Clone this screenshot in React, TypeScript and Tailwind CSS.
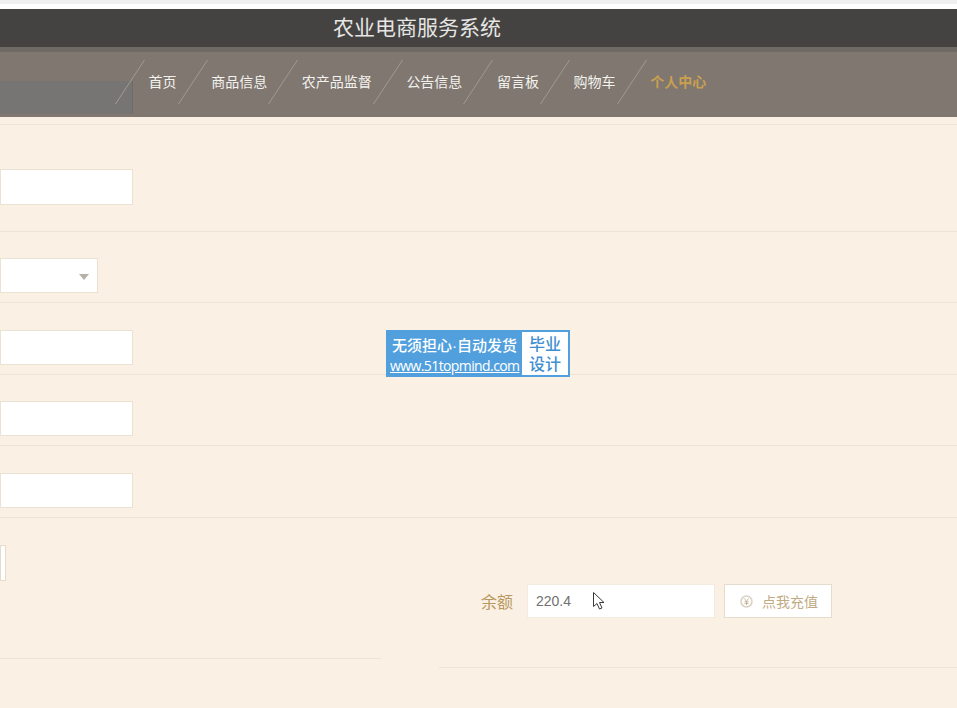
const navItems = ["首页", "商品信息", "农产品监督", "公告信息", "留言板", "购物车", "个人中心"];

const cjk = "font-['Noto_Sans_CJK_SC','Liberation_Sans',sans-serif]";

function Slash() {
    return (
        <div className="w-[34.6px] shrink-0">
            <svg width="30" height="44" viewBox="0 0 30 44" className="block">
                <line x1="0.5" y1="44" x2="29.5" y2="0" stroke="#a39a8e" strokeWidth="1" />
            </svg>
        </div>
    );
}

function FormRow({ width, height, arrow }: { width: string; height: string; arrow?: boolean }) {
    return (
        <div className={`flex items-end border-b border-[#efe4d3] pb-[9px] ${height}`}>
            <div className={`relative h-[35px] border border-[#ece2d3] bg-white ${width}`}>
                {arrow && (
                    <div className="absolute right-[8px] top-[15px] h-0 w-0 border-x-[5px] border-t-[6px] border-x-transparent border-t-[#b5b0a8]" />
                )}
            </div>
        </div>
    );
}

export default function App() {
    return (
        <div className={`relative h-[708px] w-[957px] overflow-hidden bg-[#faf0e4] ${cjk}`}>
            <div className="h-[4px] bg-[#f0f0f0]" />
            <div className="h-[5px] bg-white" />
            <div className="flex h-[38px] items-center bg-[#444341] pb-[4px] pl-[333px] text-[21px] leading-none text-[#e6e6e4]">
                农业电商服务系统
            </div>
            <div className="flex h-[70px] border-t-[5px] border-[#6f6a64] bg-[#7f7770]">
                <div className="mb-[3px] mt-auto h-[33px] w-[133px] shrink-0 border-r border-[#6f6c68] bg-[#767573]" />
                <div className="-ml-[18px] mt-[8px] flex h-[44px] items-center self-start text-[14px] leading-none text-[#f4f2ee]">
                    {navItems.map((item, i) => (
                        <div key={item} className="flex items-center">
                            <Slash />
                            <span className={i === 6 ? "-ml-[1px] mr-[1px] -mt-[2px] font-bold text-[#c9a050]" : "-ml-[1px] mr-[1px] -mt-[2px]"}>{item}</span>
                        </div>
                    ))}
                </div>
            </div>

            <div className="h-[8px] border-b border-[#efe4d3]" />
            <div className="flex h-[107px] items-end border-b border-[#efe4d3] pb-[26px]">
                <div className="h-[36px] w-[133px] border border-[#ece2d3] bg-white" />
            </div>
            <FormRow width="w-[98px]" height="h-[71px]" arrow />
            <FormRow width="w-[133px]" height="h-[72px]" />
            <FormRow width="w-[133px]" height="h-[71px]" />
            <FormRow width="w-[133px]" height="h-[72px]" />

            <div className="flex items-start">
                <div className="h-[141px] w-[381px] border-b border-[#efe4d3] pt-[27px]">
                    <div className="h-[36px] w-[6px] border border-[#e6dbcc] bg-white" />
                </div>
                <div className="ml-[58px] flex h-[150px] flex-1 items-start border-b border-[#efe4d3] pl-[42px] pt-[66px]">
                    <div className="flex h-[34px] w-[32px] items-center text-[16px] text-[#b9985f]">余额</div>
                    <div className="ml-[14px] flex h-[34px] w-[188px] items-center border border-[#f3ebe0] bg-white pl-[8px] text-[14px] text-[#707070] font-['Liberation_Sans',sans-serif]">
                        220.4
                    </div>
                    <button className="ml-[9px] flex h-[34px] w-[108px] items-center border border-[#e6dccd] bg-white pl-[15px] text-[14px] text-[#c2aa85]">
                        <svg width="13" height="13" viewBox="0 0 13 13" className="shrink-0">
                            <circle cx="6.5" cy="6.5" r="5.5" fill="none" stroke="#d9d2c4" strokeWidth="1.5" />
                            <path d="M4.5 3.5 6.5 6.5 8.5 3.5M6.5 6.5V10M4.5 6.8H8.5M4.5 8.4H8.5" fill="none" stroke="#c2aa85" strokeWidth="0.8" />
                        </svg>
                        <span className="ml-[9px]">点我充值</span>
                    </button>
                </div>
            </div>

            <div className="absolute left-[386px] top-[330px] flex h-[47px] w-[184px] bg-[#519fdd] text-white">
                <div className="w-[136px] pl-[4px] pt-[4px]">
                    <div className="whitespace-nowrap pl-[2px] text-[15px] font-medium leading-[22px]">
                        无须担心<span className="font-['Liberation_Sans',sans-serif]">·</span>自动发货
                    </div>
                    <div className="whitespace-nowrap text-[14px] font-medium leading-[18px] tracking-[-0.6px] underline font-['Open_Sans',sans-serif]">
                        www.51topmind.com
                    </div>
                </div>
                <div className="mt-[2px] h-[43px] w-[46px] bg-white pt-[1px] text-center text-[16px] font-medium leading-[20px] text-[#3f8fd0]">
                    毕业
                    <br />
                    设计
                </div>
            </div>

            <svg width="14" height="20" viewBox="0 0 14 20" className="absolute left-[592px] top-[591px]">
                <path d="M1.5 1.5V15.5L5 12.5 7.5 18 10 17 7.5 11.5H12Z" fill="#fff" stroke="#3a3a3a" strokeWidth="1" />
            </svg>
        </div>
    );
}
